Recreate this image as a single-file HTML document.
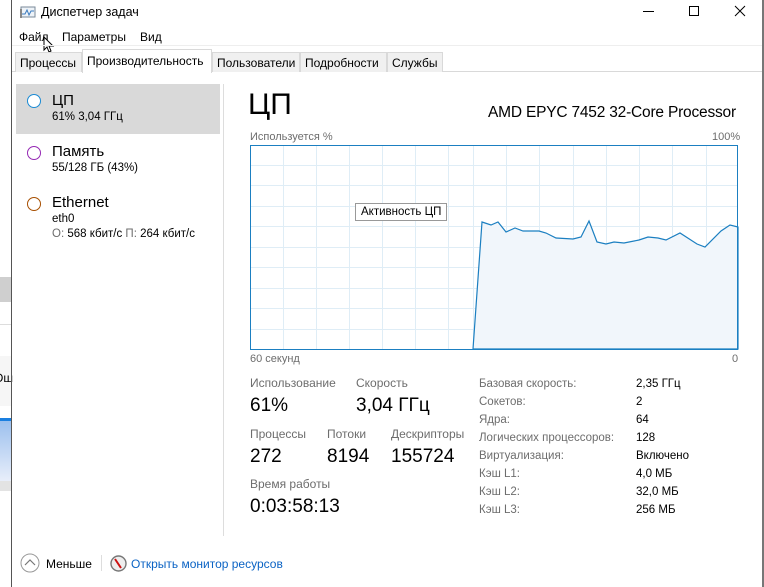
<!DOCTYPE html>
<html><head><meta charset="utf-8"><style>
*{margin:0;padding:0;box-sizing:border-box}
body{width:764px;height:587px;overflow:hidden;background:#fff;font-family:"Liberation Sans","Noto Sans CJK SC",sans-serif;color:#000;position:relative;font-size:12px}
.a{position:absolute;white-space:nowrap}
.g{color:#6d6d6d}
.tab{position:absolute;top:52px;height:20px;background:#f0f0f0;border:1px solid #d9d9d9;border-bottom:none;font-size:12px;padding:3px 4px 0}
</style></head><body>
<div class="a" style="left:0;top:277px;width:11px;height:25px;background:#cfcfcf"></div>
<div class="a" style="left:0;top:324px;width:11px;height:1px;background:#ddd"></div>
<div class="a" style="left:0;top:356px;width:11px;height:1px;background:#ddd"></div>
<div class="a" style="left:0;top:356px;width:11px;height:50px;background:#f6f6f6"></div>
<div class="a" style="left:-6px;top:371px;font-size:12px">Ош</div>
<div class="a" style="left:0;top:418px;width:11px;height:3px;background:#1a7fe0"></div>
<div class="a" style="left:0;top:421px;width:11px;height:60px;background:linear-gradient(#9cc0ee,#e8eefa)"></div>
<div class="a" style="left:0;top:481px;width:11px;height:10px;background:#e3e3e3"></div>
<div class="a" style="left:11px;top:0;width:1px;height:587px;background:#555"></div>
<div class="a" style="left:762px;top:0;width:2px;height:587px;background:#777"></div>
<svg class="a" style="left:20px;top:6px" width="16" height="14"><rect x="1" y="1" width="14" height="10" fill="#eef3f8" stroke="#7a8a99"/><polyline points="2,8 5,8 7,4 9,9 11,5 14,5" fill="none" stroke="#3a7bbf"/><rect x="0" y="3" width="2" height="9" fill="#888"/></svg>
<div class="a" style="left:41px;top:5px;font-size:12.5px">Диспетчер задач</div>
<div class="a" style="left:643px;top:11px;width:11px;height:1px;background:#000"></div>
<div class="a" style="left:689px;top:6px;width:10px;height:10px;border:1px solid #000"></div>
<svg class="a" style="left:734px;top:5px" width="12" height="12"><path d="M1 1L11 11M11 1L1 11" stroke="#000"/></svg>
<div class="a" style="left:19px;top:30px">Файл</div>
<div class="a" style="left:62px;top:30px">Параметры</div>
<div class="a" style="left:140px;top:30px">Вид</div>
<svg class="a" style="left:43px;top:36px" width="12" height="18"><path d="M1 1L1 14L4 11L6 16L8 15L6 10L10 10Z" fill="#fff" stroke="#000"/></svg>
<div class="a" style="left:12px;top:45px;width:750px;height:1px;background:#eee"></div>
<div class="a" style="left:12px;top:71px;width:750px;height:1px;background:#d9d9d9"></div>
<div class="tab" style="left:15px;width:67px">Процессы</div>
<div class="tab" style="left:82px;top:49px;height:24px;width:130px;background:#fff;padding-top:4px">Производительность</div>
<div class="tab" style="left:212px;width:88px">Пользователи</div>
<div class="tab" style="left:300px;width:87px">Подробности</div>
<div class="tab" style="left:387px;width:56px">Службы</div>
<div class="a" style="left:16px;top:84px;width:204px;height:50px;background:#d9d9d9"></div>
<div class="a" style="left:27px;top:94px;width:14px;height:14px;border-radius:50%;border:1.5px solid #1a8ad4;background:#fff"></div>
<div class="a" style="left:52px;top:92px;font-size:15px">ЦП</div>
<div class="a" style="left:52px;top:111px;font-size:11.5px">61% 3,04 ГГц</div>
<div class="a" style="left:27px;top:146px;width:14px;height:14px;border-radius:50%;border:1.5px solid #9528b4;background:#fff"></div>
<div class="a" style="left:52px;top:143px;font-size:15px">Память</div>
<div class="a" style="left:52px;top:162px;font-size:11.5px">55/128 ГБ (43%)</div>
<div class="a" style="left:27px;top:197px;width:14px;height:14px;border-radius:50%;border:1.5px solid #a74f01;background:#fff"></div>
<div class="a" style="left:52px;top:194px;font-size:15px">Ethernet</div>
<div class="a" style="left:52px;top:213px;font-size:11.5px">eth0</div>
<div class="a" style="left:52px;top:228px;font-size:11.5px"><span class="g">О:</span> 568 кбит/с <span class="g">П:</span> 264 кбит/с</div>
<div class="a" style="left:223px;top:84px;width:1px;height:452px;background:#ddd"></div>
<div class="a" style="left:248px;top:88px;font-size:30px">ЦП</div>
<div class="a" style="left:488px;top:104px;font-size:15.5px;letter-spacing:-0.2px">AMD EPYC 7452 32-Core Processor</div>
<div class="a g" style="left:250px;top:131px;font-size:11px">Используется %</div>
<div class="a g" style="left:712px;top:131px;font-size:11px">100%</div>
<svg class="a" style="left:250px;top:145px" width="489" height="206">
<g stroke="#dfedf6" stroke-width="1">
<path d="M0 20.5H488M0 40.5H488M0 61.5H488M0 81.5H488M0 102.5H488M0 122.5H488M0 143.5H488M0 163.5H488M0 184.5H488"/>
<path d="M33.5 0V205M66.5 0V205M99.5 0V205M132.5 0V205M165.5 0V205M198.5 0V205M223.5 0V205M256.5 0V205M289.5 0V205M323.5 0V205M356.5 0V205M389.5 0V205M422.5 0V205M456.5 0V205"/>
</g>
<path d="M223 204L232 77L241 80L248 77L256 87L265 83L273 86L289 86L296 88L306 93L323 94L331 92L339 76L347 97L356 99L364 97L374 98L389 95L398 92L408 93L416 95L430 88L447 99L455 102L471 86L480 80L488 82L488 204Z" fill="#f1f6fb" stroke="#1b7fc1" stroke-width="1.2"/>
<rect x="0.5" y="0.5" width="487" height="204" fill="none" stroke="#1b7fc1"/>
</svg>
<div class="a" style="left:355px;top:203px;padding:2px 5px;border:1px solid #999;background:#fff;font-size:11.5px">Активность ЦП</div>
<div class="a g" style="left:250px;top:353px;font-size:11px">60 секунд</div>
<div class="a g" style="left:732px;top:353px;font-size:11px">0</div>
<div class="a g" style="left:250px;top:376px;font-size:12px">Использование</div>
<div class="a g" style="left:356px;top:376px;font-size:12px">Скорость</div>
<div class="a" style="left:250px;top:395px;font-size:19px">61%</div>
<div class="a" style="left:356px;top:395px;font-size:19px">3,04 ГГц</div>
<div class="a g" style="left:250px;top:427px;font-size:12px">Процессы</div>
<div class="a g" style="left:327px;top:427px;font-size:12px">Потоки</div>
<div class="a g" style="left:391px;top:427px;font-size:12px">Дескрипторы</div>
<div class="a" style="left:250px;top:446px;font-size:19px">272</div>
<div class="a" style="left:327px;top:446px;font-size:19px">8194</div>
<div class="a" style="left:391px;top:446px;font-size:19px">155724</div>
<div class="a g" style="left:250px;top:477px;font-size:12px">Время работы</div>
<div class="a" style="left:250px;top:496px;font-size:19px">0:03:58:13</div>
<div class="a g" style="left:479px;top:375px;font-size:11.5px;line-height:18px">Базовая скорость:<br>Сокетов:<br>Ядра:<br>Логических процессоров:<br>Виртуализация:<br>Кэш L1:<br>Кэш L2:<br>Кэш L3:</div>
<div class="a" style="left:636px;top:375px;font-size:11.5px;line-height:18px">2,35 ГГц<br>2<br>64<br>128<br>Включено<br>4,0 МБ<br>32,0 МБ<br>256 МБ</div>
<svg class="a" style="left:20px;top:553px" width="20" height="20"><circle cx="10" cy="10" r="9" fill="#fff" stroke="#999"/><path d="M5 12L10 7L15 12" fill="none" stroke="#777" stroke-width="1.2"/></svg>
<div class="a" style="left:46px;top:557px;font-size:12px">Меньше</div>
<div class="a" style="left:101px;top:555px;width:1px;height:16px;background:#ddd"></div>
<svg class="a" style="left:110px;top:555px" width="17" height="17"><circle cx="8.5" cy="8.5" r="7.5" fill="#eee" stroke="#777" stroke-width="1.4"/><path d="M5 4L11 13" stroke="#c11" stroke-width="2"/></svg>
<div class="a" style="left:131px;top:557px;font-size:12px;color:#0b63c4">Открыть монитор ресурсов</div>
</body></html>
